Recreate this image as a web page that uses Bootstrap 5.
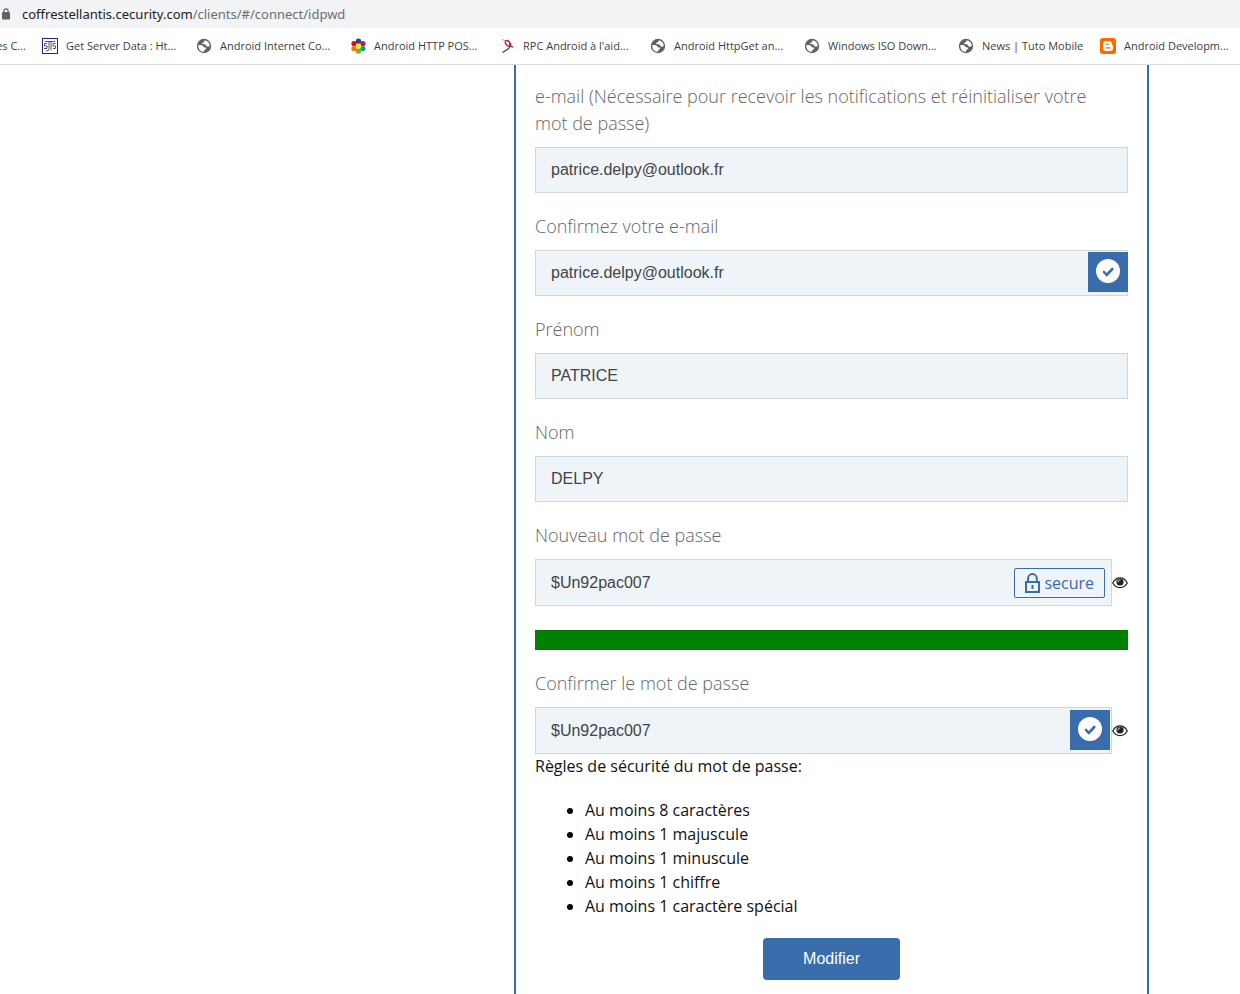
<!DOCTYPE html>
<html lang="fr">
<head>
<meta charset="utf-8">
<meta name="viewport" content="width=device-width, initial-scale=1">
<title>Coffre Stellantis</title>
<link href="https://cdn.jsdelivr.net/npm/bootstrap@5.3.0/dist/css/bootstrap.min.css" rel="stylesheet">
<style>
  :root { --brand: #386cab; }
  body { font-family: "Open Sans", sans-serif; font-size: 16px; line-height: 24px; color: #111; background: #fff; }
  .address-bar { height: 28px; padding-left: 2px; gap: 12px; background: #f1f3f4; font-family: "Noto Sans", sans-serif; font-size: 13px; }
  .address-bar a { color: #202124; }
  .address-bar .address-path { color: #6b6f74; }
  .bookmarks { height: 37px; border-bottom: 1px solid #dadce0; display: grid; grid-template-columns: 42px 154px 154px 150px 150px 154px 154px 142px auto; overflow: hidden; font-size: 11px; }
  .bookmarks a { color: #3c4043; gap: 8px; white-space: nowrap; }
  .bookmarks svg { flex: none; }
  .page-columns { display: grid; grid-template-columns: 514fr 635fr 91fr; min-height: calc(100vh - 65px); }
  .account-panel { grid-column: 2; border: solid var(--brand); border-width: 0 2px; padding: 18px 19px 14px; }
  .field { margin-bottom: 20px; }
  .field label { display: block; font-size: 18px; font-weight: 300; line-height: 27px; color: #666; margin-bottom: 10px; padding-right: 16px; }
  .field .form-control { height: 46px; padding: 0 15px; border: 1px solid #d3d6d9; border-radius: 0; background: #eff4f9; color: #444; font-family: "Liberation Sans", sans-serif; font-size: 16px; }
  .password-row .form-control { height: 47px; }
  .check-tile { position: absolute; top: 2px; right: 0; width: 40px; height: 40px; padding-top: 7px; background: var(--brand); }
  .password-row .check-tile { top: 3px; right: 2px; }
  .secure-tag { position: absolute; top: 9px; right: 7px; height: 30px; padding: 0 10px 0 9px; gap: 3px; border: 1px solid var(--brand); border-radius: 2px; color: var(--brand); }
  .eye-button { border: 0; background: none; padding: 0; width: 16px; color: #222; }
  .strength { height: 20px; border-radius: 0; margin: 24px 0 20px; background: #ddd; }
  .strength .progress-bar { background: green; }
  .rules { margin: 20px 0; padding-left: 50px; }
  .rules li::marker { color: #000; }
  .submit-button { height: 42px; padding: 0 40px; border: 0; border-radius: 4px; background: var(--brand); font-family: "Liberation Sans", sans-serif; font-size: 16px; }
</style>
</head>
<body>
<svg width="0" height="0" class="position-absolute" aria-hidden="true">
  <symbol id="globe" viewBox="0 0 16 16"><circle cx="8" cy="8" r="7.2" fill="#5f6368"/><path fill="#fff" d="M2.300 7.200c1.500-.2 3.500-.2 4.400.5.700.6.600 1.300 1.500 1.600 1 .3 2 .2 2 1 0 .9-1.200 1-1.700 1.600-.4.500-.3 1.300-.8 1.900C4.500 13.700 2 11 2.300 7.200zM8.800 2.300c2.900.4 4.900 2.800 4.900 5.500-.8.900-2.100 1.100-3 .5-.8-.5-.7-1.500-1.600-1.800-1-.3-2.900.2-3-.9-.1-1 1.400-.9 2-1.500.4-.5.200-1.300.7-1.800z"/></symbol>
  <symbol id="check" viewBox="0 0 24 24"><circle cx="12" cy="12" r="12" fill="#fff"/><path fill="none" stroke="#386cab" stroke-width="2.600" stroke-linecap="round" stroke-linejoin="round" d="M8 13l2.700 3 5.600-6"/></symbol>
  <symbol id="eye" viewBox="0 0 16 12"><path fill="#fff" stroke="currentColor" stroke-width="1.200" d="M.7 6C4.300-.8 11.700-.8 15.300 6 11.700 12.100 4.300 12.100.7 6z"/><circle cx="8" cy="5" r="3.600" fill="currentColor"/><path fill="none" stroke="#fff" stroke-width=".9" stroke-linecap="round" d="M6 4.900c0-1.100.8-1.900 1.900-1.900"/></symbol>
</svg>

<header>
  <div class="address-bar d-flex align-items-center">
    <svg class="flex-shrink-0" width="8" height="12" viewBox="0 0 8 12"><rect y="4" width="8" height="7.500" rx="1" fill="#5f6368"/><path d="M1.900 5V3a2.100 2.100 0 0 1 4.200 0v2" fill="none" stroke="#5f6368" stroke-width="1.200"/></svg>
    <a class="text-decoration-none" href="#">coffrestellantis.cecurity.com<span class="address-path">/clients/#/connect/idpwd</span></a>
  </div>
  <nav class="bookmarks" aria-label="Favoris">
    <a class="d-flex align-items-center justify-content-end pe-3 text-decoration-none" href="#">es C...</a>
    <a class="d-flex align-items-center text-decoration-none" href="#"><svg width="16" height="16" viewBox="0 0 16 16"><rect x=".5" y=".5" width="15" height="15" fill="#fff" stroke="#2a1d94"/><path d="M3 3.500h10M7 3.500v7q0 3-3 2.500M9 3.500v9M5 5.500H2.500v2.500H5v2.500H2M13.500 5.500H11v2.500h2.500v2.500H11" fill="none" stroke="#555566"/></svg>Get Server Data : Ht...</a>
    <a class="d-flex align-items-center text-decoration-none" href="#"><svg width="16" height="16"><use href="#globe"/></svg>Android Internet Co...</a>
    <a class="d-flex align-items-center text-decoration-none" href="#"><svg width="16" height="16" viewBox="0 0 16 16"><circle cx="8.500" cy="3.200" r="2.700" fill="#174a8c"/><circle cx="12.900" cy="5.500" r="2.600" fill="#d5007f"/><circle cx="12.900" cy="10.500" r="2.600" fill="#00a878"/><circle cx="8.500" cy="13" r="2.700" fill="#70b62c"/><circle cx="4" cy="10.500" r="2.600" fill="#ee7600"/><circle cx="4" cy="5.500" r="2.600" fill="#e30613"/><circle cx="8.500" cy="8" r="2.500" fill="#ffec00"/></svg>Android HTTP POS...</a>
    <a class="d-flex align-items-center text-decoration-none" href="#"><svg width="15" height="16" viewBox="0 0 15 16"><path d="M2 1.500l4 1.500" stroke="#aaa" fill="none"/><path d="M9.500 8.500C7 8 4.500 5.500 5.500 3.500S9.500 3 9.800 5 9 8 13 9" stroke="#e31b23" stroke-width="1.500" fill="none"/><path d="M10.500 5q.8 4-2.500 6l-5.500 3.500" stroke="#23359c" stroke-width="1.300" fill="none"/></svg>RPC Android à l'aid...</a>
    <a class="d-flex align-items-center text-decoration-none" href="#"><svg width="16" height="16"><use href="#globe"/></svg>Android HttpGet an...</a>
    <a class="d-flex align-items-center text-decoration-none" href="#"><svg width="16" height="16"><use href="#globe"/></svg>Windows ISO Down...</a>
    <a class="d-flex align-items-center text-decoration-none" href="#"><svg width="16" height="16"><use href="#globe"/></svg>News | Tuto Mobile</a>
    <a class="d-flex align-items-center text-decoration-none" href="#"><svg width="16" height="16" viewBox="0 0 16 16"><rect width="16" height="16" rx="2.500" fill="#ff6a00"/><path fill="#fff" d="M6.200 3h2.600A3 3 0 0 1 11.800 6c0 .8.200 1 .7 1 .4 0 .6.300.6.700v2.100A3.200 3.200 0 0 1 9.900 13H6.200A3.200 3.200 0 0 1 3 9.800V6.200A3.200 3.200 0 0 1 6.200 3z"/><path d="M6.200 6.200h2M6.200 9.900h3.800" stroke="#ff6a00" stroke-width="1.300" stroke-linecap="round"/></svg>Android Developm...</a>
  </nav>
</header>

<main class="page-columns">
  <form class="account-panel">
    <div class="field">
      <label for="email">e-mail (Nécessaire pour recevoir les notifications et réinitialiser votre mot de passe)</label>
      <input class="form-control" id="email" type="email" value="patrice.delpy@outlook.fr">
    </div>
    <div class="field">
      <label for="email2">Confirmez votre e-mail</label>
      <div class="position-relative">
        <input class="form-control" id="email2" type="email" value="patrice.delpy@outlook.fr">
        <span class="check-tile d-flex justify-content-center"><svg width="24" height="24"><use href="#check"/></svg></span>
      </div>
    </div>
    <div class="field">
      <label for="firstname">Prénom</label>
      <input class="form-control" id="firstname" type="text" value="PATRICE">
    </div>
    <div class="field">
      <label for="lastname">Nom</label>
      <input class="form-control" id="lastname" type="text" value="DELPY">
    </div>
    <div class="field mb-0">
      <label for="pwd">Nouveau mot de passe</label>
      <div class="password-row d-flex">
        <div class="position-relative flex-grow-1">
          <input class="form-control" id="pwd" type="text" value="$Un92pac007">
          <span class="secure-tag d-flex align-items-center"><svg width="17" height="20" viewBox="0 0 17 20"><path fill="none" stroke="#386cab" stroke-width="2" d="M4 9V5.500a4.400 4.400 0 0 1 8.800 0V9"/><rect x="2" y="9" width="13" height="10" fill="none" stroke="#386cab" stroke-width="2"/><path stroke="#386cab" stroke-width="2" d="M8.500 12v4"/></svg>secure</span>
        </div>
        <button type="button" class="eye-button" aria-label="Afficher le mot de passe"><svg class="d-block" width="16" height="12"><use href="#eye"/></svg></button>
      </div>
    </div>
    <div class="progress strength" role="progressbar" aria-label="Robustesse" aria-valuenow="100" aria-valuemin="0" aria-valuemax="100"><div class="progress-bar w-100"></div></div>
    <div class="field mb-0">
      <label for="pwd2">Confirmer le mot de passe</label>
      <div class="password-row d-flex">
        <div class="position-relative flex-grow-1">
          <input class="form-control" id="pwd2" type="text" value="$Un92pac007">
          <span class="check-tile d-flex justify-content-center"><svg width="24" height="24"><use href="#check"/></svg></span>
        </div>
        <button type="button" class="eye-button" aria-label="Afficher le mot de passe"><svg class="d-block" width="16" height="12"><use href="#eye"/></svg></button>
      </div>
    </div>
    <div>Règles de sécurité du mot de passe:</div>
    <ul class="rules">
      <li>Au moins 8 caractères</li>
      <li>Au moins 1 majuscule</li>
      <li>Au moins 1 minuscule</li>
      <li>Au moins 1 chiffre</li>
      <li>Au moins 1 caractère spécial</li>
    </ul>
    <div class="text-center"><button type="submit" class="btn btn-primary submit-button">Modifier</button></div>
  </form>
</main>
<script src="https://cdn.jsdelivr.net/npm/bootstrap@5.3.0/dist/js/bootstrap.bundle.min.js"></script>
</body>
</html>
